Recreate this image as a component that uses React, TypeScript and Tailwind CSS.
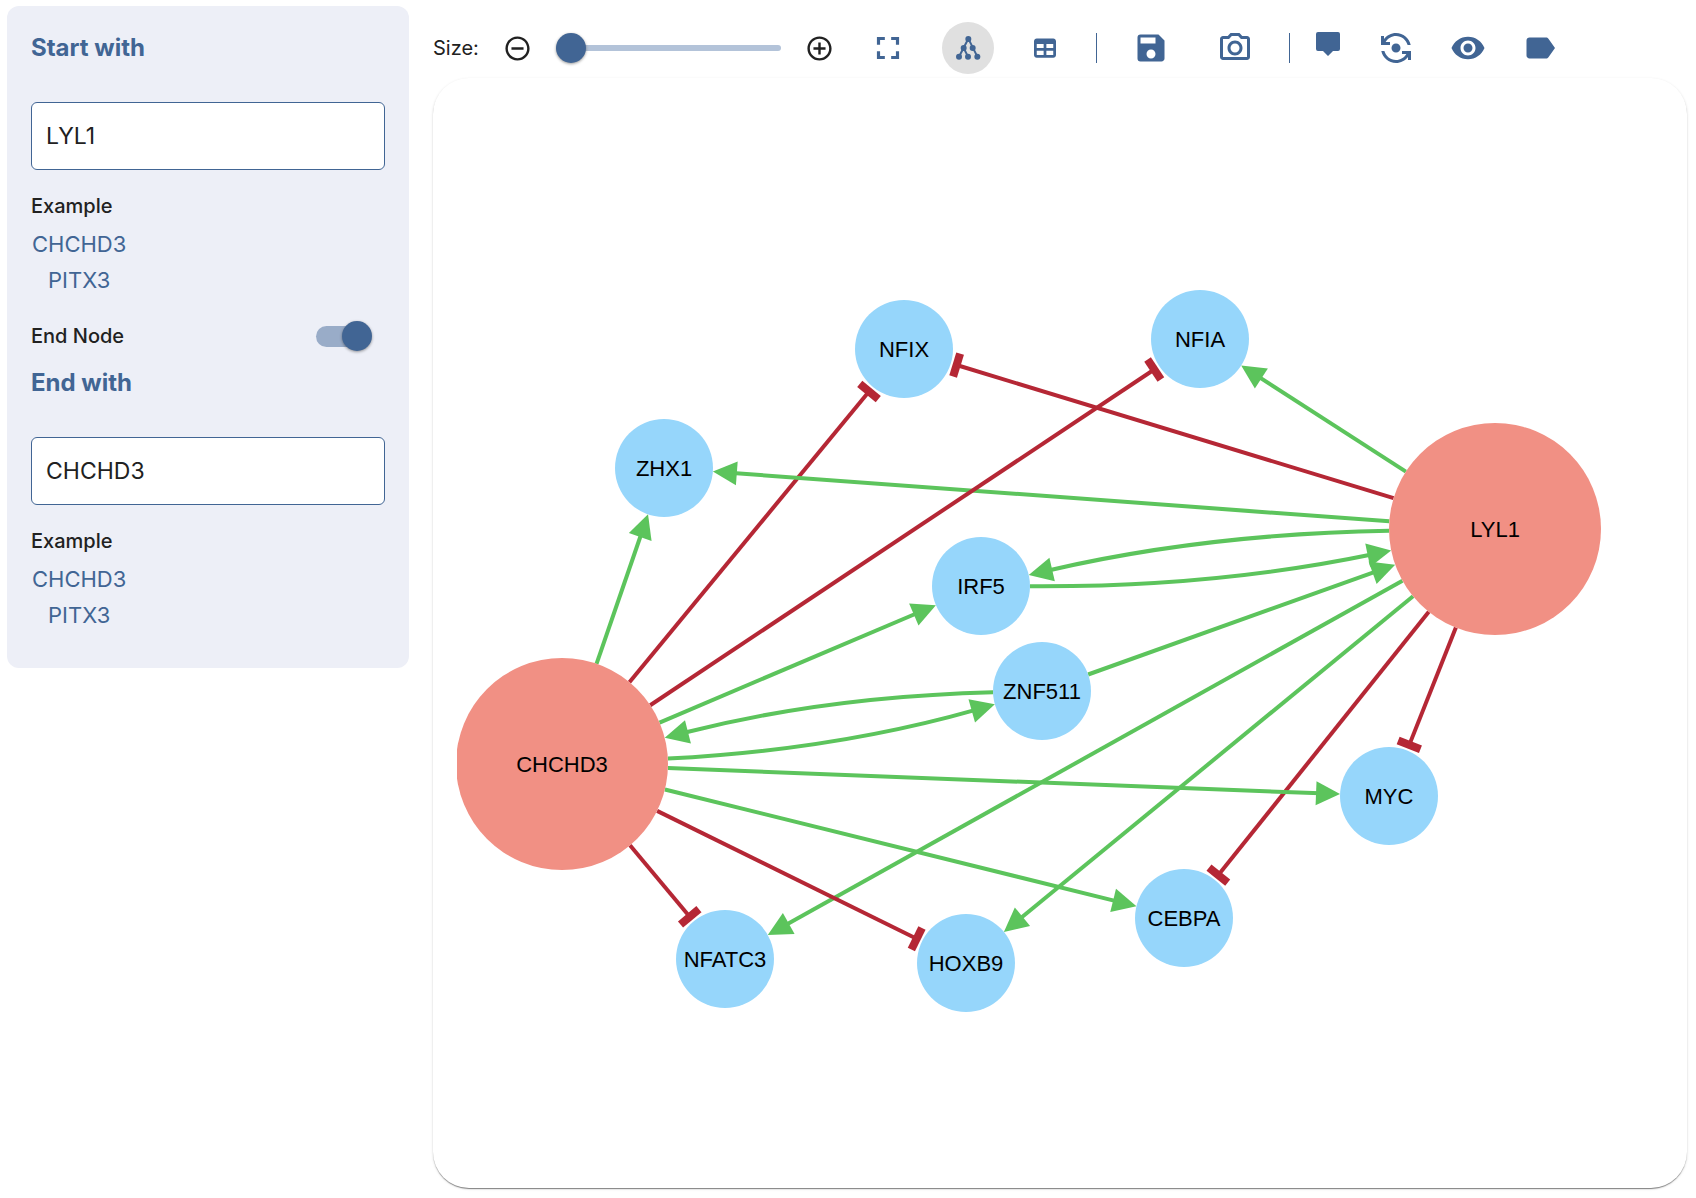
import { useState, type ReactNode } from "react";
import {
  MdAddCircleOutline,
  MdFlipCameraAndroid,
  MdFullscreen,
  MdLabel,
  MdOutlinePhotoCamera,
  MdRemoveCircleOutline,
  MdSave,
  MdVisibility,
} from "react-icons/md";
import { FaTable } from "react-icons/fa6";

type GraphNode = { x: number; y: number; r: number };
type Vec = { x: number; y: number };

const NODES: Record<string, GraphNode> = {
  CHCHD3: { x: 105, y: 686, r: 106 },
  LYL1: { x: 1038, y: 451, r: 106 },
  ZHX1: { x: 207, y: 390, r: 49 },
  NFIX: { x: 447, y: 271, r: 49 },
  NFIA: { x: 743, y: 261, r: 49 },
  IRF5: { x: 524, y: 508, r: 49 },
  ZNF511: { x: 585, y: 613, r: 49 },
  MYC: { x: 932, y: 718, r: 49 },
  CEBPA: { x: 727, y: 840, r: 49 },
  HOXB9: { x: 509, y: 885, r: 49 },
  NFATC3: { x: 268, y: 881, r: 49 },
};

type Edge = { from: string; to: string; kind: "activates" | "inhibits"; bend?: number };

const EDGES: Edge[] = [
  { from: "CHCHD3", to: "ZHX1", kind: "activates" },
  { from: "CHCHD3", to: "NFIX", kind: "inhibits" },
  { from: "CHCHD3", to: "IRF5", kind: "activates" },
  { from: "CHCHD3", to: "ZNF511", kind: "activates", bend: 27 },
  { from: "ZNF511", to: "CHCHD3", kind: "activates", bend: 27 },
  { from: "CHCHD3", to: "CEBPA", kind: "activates" },
  { from: "CHCHD3", to: "NFATC3", kind: "inhibits" },
  { from: "LYL1", to: "ZHX1", kind: "activates" },
  { from: "LYL1", to: "NFIX", kind: "inhibits" },
  { from: "LYL1", to: "NFIA", kind: "activates" },
  { from: "LYL1", to: "IRF5", kind: "activates", bend: 27 },
  { from: "IRF5", to: "LYL1", kind: "activates", bend: 27 },
  { from: "ZNF511", to: "LYL1", kind: "activates" },
  { from: "LYL1", to: "NFATC3", kind: "activates" },
  { from: "CHCHD3", to: "HOXB9", kind: "inhibits" },
  { from: "LYL1", to: "HOXB9", kind: "activates" },
  { from: "LYL1", to: "CEBPA", kind: "inhibits" },
  { from: "CHCHD3", to: "MYC", kind: "activates" },
  { from: "CHCHD3", to: "NFIA", kind: "inhibits" },
  { from: "LYL1", to: "MYC", kind: "inhibits" },
];

function towards(from: Vec, to: Vec, distance: number): Vec {
  const length = Math.hypot(to.x - from.x, to.y - from.y);
  return {
    x: from.x + ((to.x - from.x) / length) * distance,
    y: from.y + ((to.y - from.y) / length) * distance,
  };
}

function EdgeShape({ edge }: { edge: Edge }) {
  const a = NODES[edge.from];
  const b = NODES[edge.to];
  const length = Math.hypot(b.x - a.x, b.y - a.y);
  const ux = (b.x - a.x) / length;
  const uy = (b.y - a.y) / length;
  const along = (a.r + length - b.r) / 2;
  const bend = edge.bend ?? 0;
  // Reverse edges bend to the other side because their direction vector is flipped.
  const control = {
    x: a.x + ux * along - uy * bend,
    y: a.y + uy * along + ux * bend,
  };
  const start = towards(a, control, a.r);
  const activates = edge.kind === "activates";
  const end = towards(b, control, b.r + (activates ? 20 : 6));
  const tip = towards(b, control, b.r);
  const angle = (Math.atan2(b.y - control.y, b.x - control.x) * 180) / Math.PI;
  const color = activates ? "#5cc45c" : "#b52735";
  return (
    <g>
      <path
        d={`M${start.x} ${start.y}Q${control.x} ${control.y} ${end.x} ${end.y}`}
        fill="none"
        stroke={color}
        strokeWidth={4}
      />
      <path
        d={activates ? "M0 0L-24 -12V12Z" : "M-2 -12H-10V12H-2Z"}
        fill={color}
        transform={`translate(${tip.x} ${tip.y}) rotate(${angle})`}
      />
    </g>
  );
}

function NetworkGraph() {
  return (
    <svg viewBox="0 0 1206 1110" className="block h-auto w-full" role="img" aria-label="Gene regulatory network">
      {EDGES.map((edge) => (
        <EdgeShape key={`${edge.from}-${edge.to}`} edge={edge} />
      ))}
      {Object.entries(NODES).map(([name, n]) => (
        <g key={name}>
          <circle cx={n.x} cy={n.y} r={n.r} fill={n.r > 50 ? "#f19084" : "#96d6fb"} />
          <text
            x={n.x}
            y={n.y + 8}
            textAnchor="middle"
            className="fill-black font-['Liberation_Sans',Arial,sans-serif] text-[22px]"
          >
            {name}
          </text>
        </g>
      ))}
    </svg>
  );
}

function TreeIcon() {
  return (
    <svg width="26" height="26" viewBox="346 107 78 78" fill="currentColor" aria-hidden="true">
      <path d="M358 172L386 118L413 172M372 146L385 172" fill="none" stroke="currentColor" strokeWidth="6" />
      <circle cx="386" cy="119" r="9" />
      <circle cx="372" cy="146" r="9" />
      <circle cx="399" cy="146" r="9" />
      <circle cx="358" cy="172" r="9" />
      <circle cx="385" cy="172" r="9" />
      <circle cx="413" cy="172" r="9" />
    </svg>
  );
}

function TooltipIcon() {
  return (
    <svg width="26" height="34" viewBox="0 0 26 34" fill="currentColor" aria-hidden="true">
      <path d="M3 1H23Q25 1 25 3V18Q25 20 23 20H18L13 25L8 20H3Q1 20 1 18V3Q1 1 3 1Z" />
    </svg>
  );
}

function ToolButton({ label, active, children }: { label: string; active?: boolean; children: ReactNode }) {
  return (
    <button
      type="button"
      aria-label={label}
      aria-pressed={active}
      className={`flex size-[52px] shrink-0 items-center justify-center rounded-full ${active ? "bg-[#e0e0e0]" : ""}`}
    >
      {children}
    </button>
  );
}

function Divider() {
  return <div className="h-[30px] w-px shrink-0 bg-[#416594]" />;
}

function Toolbar() {
  const [size, setSize] = useState(0);
  return (
    <div className="flex h-[60px] items-center text-[#416594]">
      <label htmlFor="size" className="w-[70px] shrink-0 text-[20px] text-[#212121]">
        Size:
      </label>
      <button type="button" aria-label="Decrease size" className="shrink-0 text-[#212121]">
        <MdRemoveCircleOutline size={29} />
      </button>
      <input
        id="size"
        type="range"
        min={0}
        max={100}
        value={size}
        onChange={(e) => setSize(Number(e.target.value))}
        className="mx-6 h-[30px] w-[225px] shrink-0 cursor-pointer appearance-none bg-transparent [&::-webkit-slider-runnable-track]:h-[6px] [&::-webkit-slider-runnable-track]:rounded-full [&::-webkit-slider-runnable-track]:bg-[#b3c3d9] [&::-webkit-slider-thumb]:-mt-3 [&::-webkit-slider-thumb]:size-[30px] [&::-webkit-slider-thumb]:appearance-none [&::-webkit-slider-thumb]:rounded-full [&::-webkit-slider-thumb]:bg-[#416594] [&::-webkit-slider-thumb]:shadow-[0_1px_3px_rgba(0,0,0,0.4)]"
      />
      <button type="button" aria-label="Increase size" className="shrink-0 text-[#212121]">
        <MdAddCircleOutline size={29} />
      </button>
      <div className="ml-7 flex items-center gap-7">
        <ToolButton label="Fit to screen">
          <MdFullscreen size={38} />
        </ToolButton>
        <div className="flex items-center gap-[25px]">
          <ToolButton label="Network view" active>
            <TreeIcon />
          </ToolButton>
          <ToolButton label="Table view">
            <FaTable size={22} />
          </ToolButton>
          <Divider />
        </div>
        <div className="flex items-center gap-8">
          <ToolButton label="Save">
            <MdSave size={36} />
          </ToolButton>
          <ToolButton label="Take screenshot">
            <MdOutlinePhotoCamera size={36} />
          </ToolButton>
        </div>
        <Divider />
      </div>
      <div className="ml-3 flex items-center gap-4">
        <ToolButton label="Tooltips">
          <TooltipIcon />
        </ToolButton>
        <div className="flex items-center gap-5">
          <ToolButton label="Switch direction">
            <MdFlipCameraAndroid size={36} />
          </ToolButton>
          <ToolButton label="Visibility">
            <MdVisibility size={36} />
          </ToolButton>
          <ToolButton label="Labels">
            <MdLabel size={36} />
          </ToolButton>
        </div>
      </div>
    </div>
  );
}

function GeneField({ id, title, initial }: { id: string; title: string; initial: string }) {
  const [value, setValue] = useState(initial);
  return (
    <section>
      <h2 className="text-[24px] leading-9 font-bold text-[#416594]">
        <label htmlFor={id}>{title}</label>
      </h2>
      <input
        id={id}
        type="text"
        value={value}
        onChange={(e) => setValue(e.target.value)}
        className="mt-9 block h-[68px] w-full rounded-md border border-[#416594] bg-white px-[14px] text-[23px] text-[#212121] outline-none"
      />
      <p className="mt-[18px] text-[20px] leading-9 font-medium text-[#212121]">Example</p>
      <ul className="mt-[2px] text-[22px] leading-9 text-[#416594]">
        <li>
          <a href="#CHCHD3" onClick={() => setValue("CHCHD3")} className="ml-px">
            CHCHD3
          </a>
        </li>
        <li>
          <a href="#PITX3" onClick={() => setValue("PITX3")} className="ml-[17px]">
            PITX3
          </a>
        </li>
      </ul>
    </section>
  );
}

function EndNodeSwitch() {
  const [on, setOn] = useState(true);
  return (
    <label className="mt-5 mb-[11px] flex h-9 items-center justify-between pr-[13px] text-[20px] font-medium text-[#212121]">
      End Node
      <span className="relative flex h-[30px] w-14 items-center">
        <input
          type="checkbox"
          role="switch"
          checked={on}
          onChange={(e) => setOn(e.target.checked)}
          className="peer h-[21px] w-[50px] appearance-none rounded-full bg-gray-400 checked:bg-[#99acc8]"
        />
        <span className="pointer-events-none absolute top-0 left-0 size-[30px] rounded-full bg-[#416594] shadow-[0_1px_3px_rgba(0,0,0,0.4)] peer-checked:left-[26px]" />
      </span>
    </label>
  );
}

export default function App() {
  return (
    <div className="flex items-start gap-6 bg-white pr-[9px] pl-[7px] font-[Inter,sans-serif]">
      <aside className="mt-[6px] w-[402px] shrink-0 rounded-xl bg-[#edeff7] px-6 pt-6 pb-[35px]">
        <GeneField id="start-gene" title="Start with" initial="LYL1" />
        <EndNodeSwitch />
        <GeneField id="end-gene" title="End with" initial="CHCHD3" />
      </aside>
      <main className="min-w-0 flex-1 pt-[18px] pb-[10px]">
        <Toolbar />
        <div className="rounded-[36px] bg-white px-6 shadow-[0_2px_1px_-1px_rgba(0,0,0,0.3),0_1px_1px_rgba(0,0,0,0.2),0_1px_3px_rgba(0,0,0,0.12)]">
          <NetworkGraph />
        </div>
      </main>
    </div>
  );
}
